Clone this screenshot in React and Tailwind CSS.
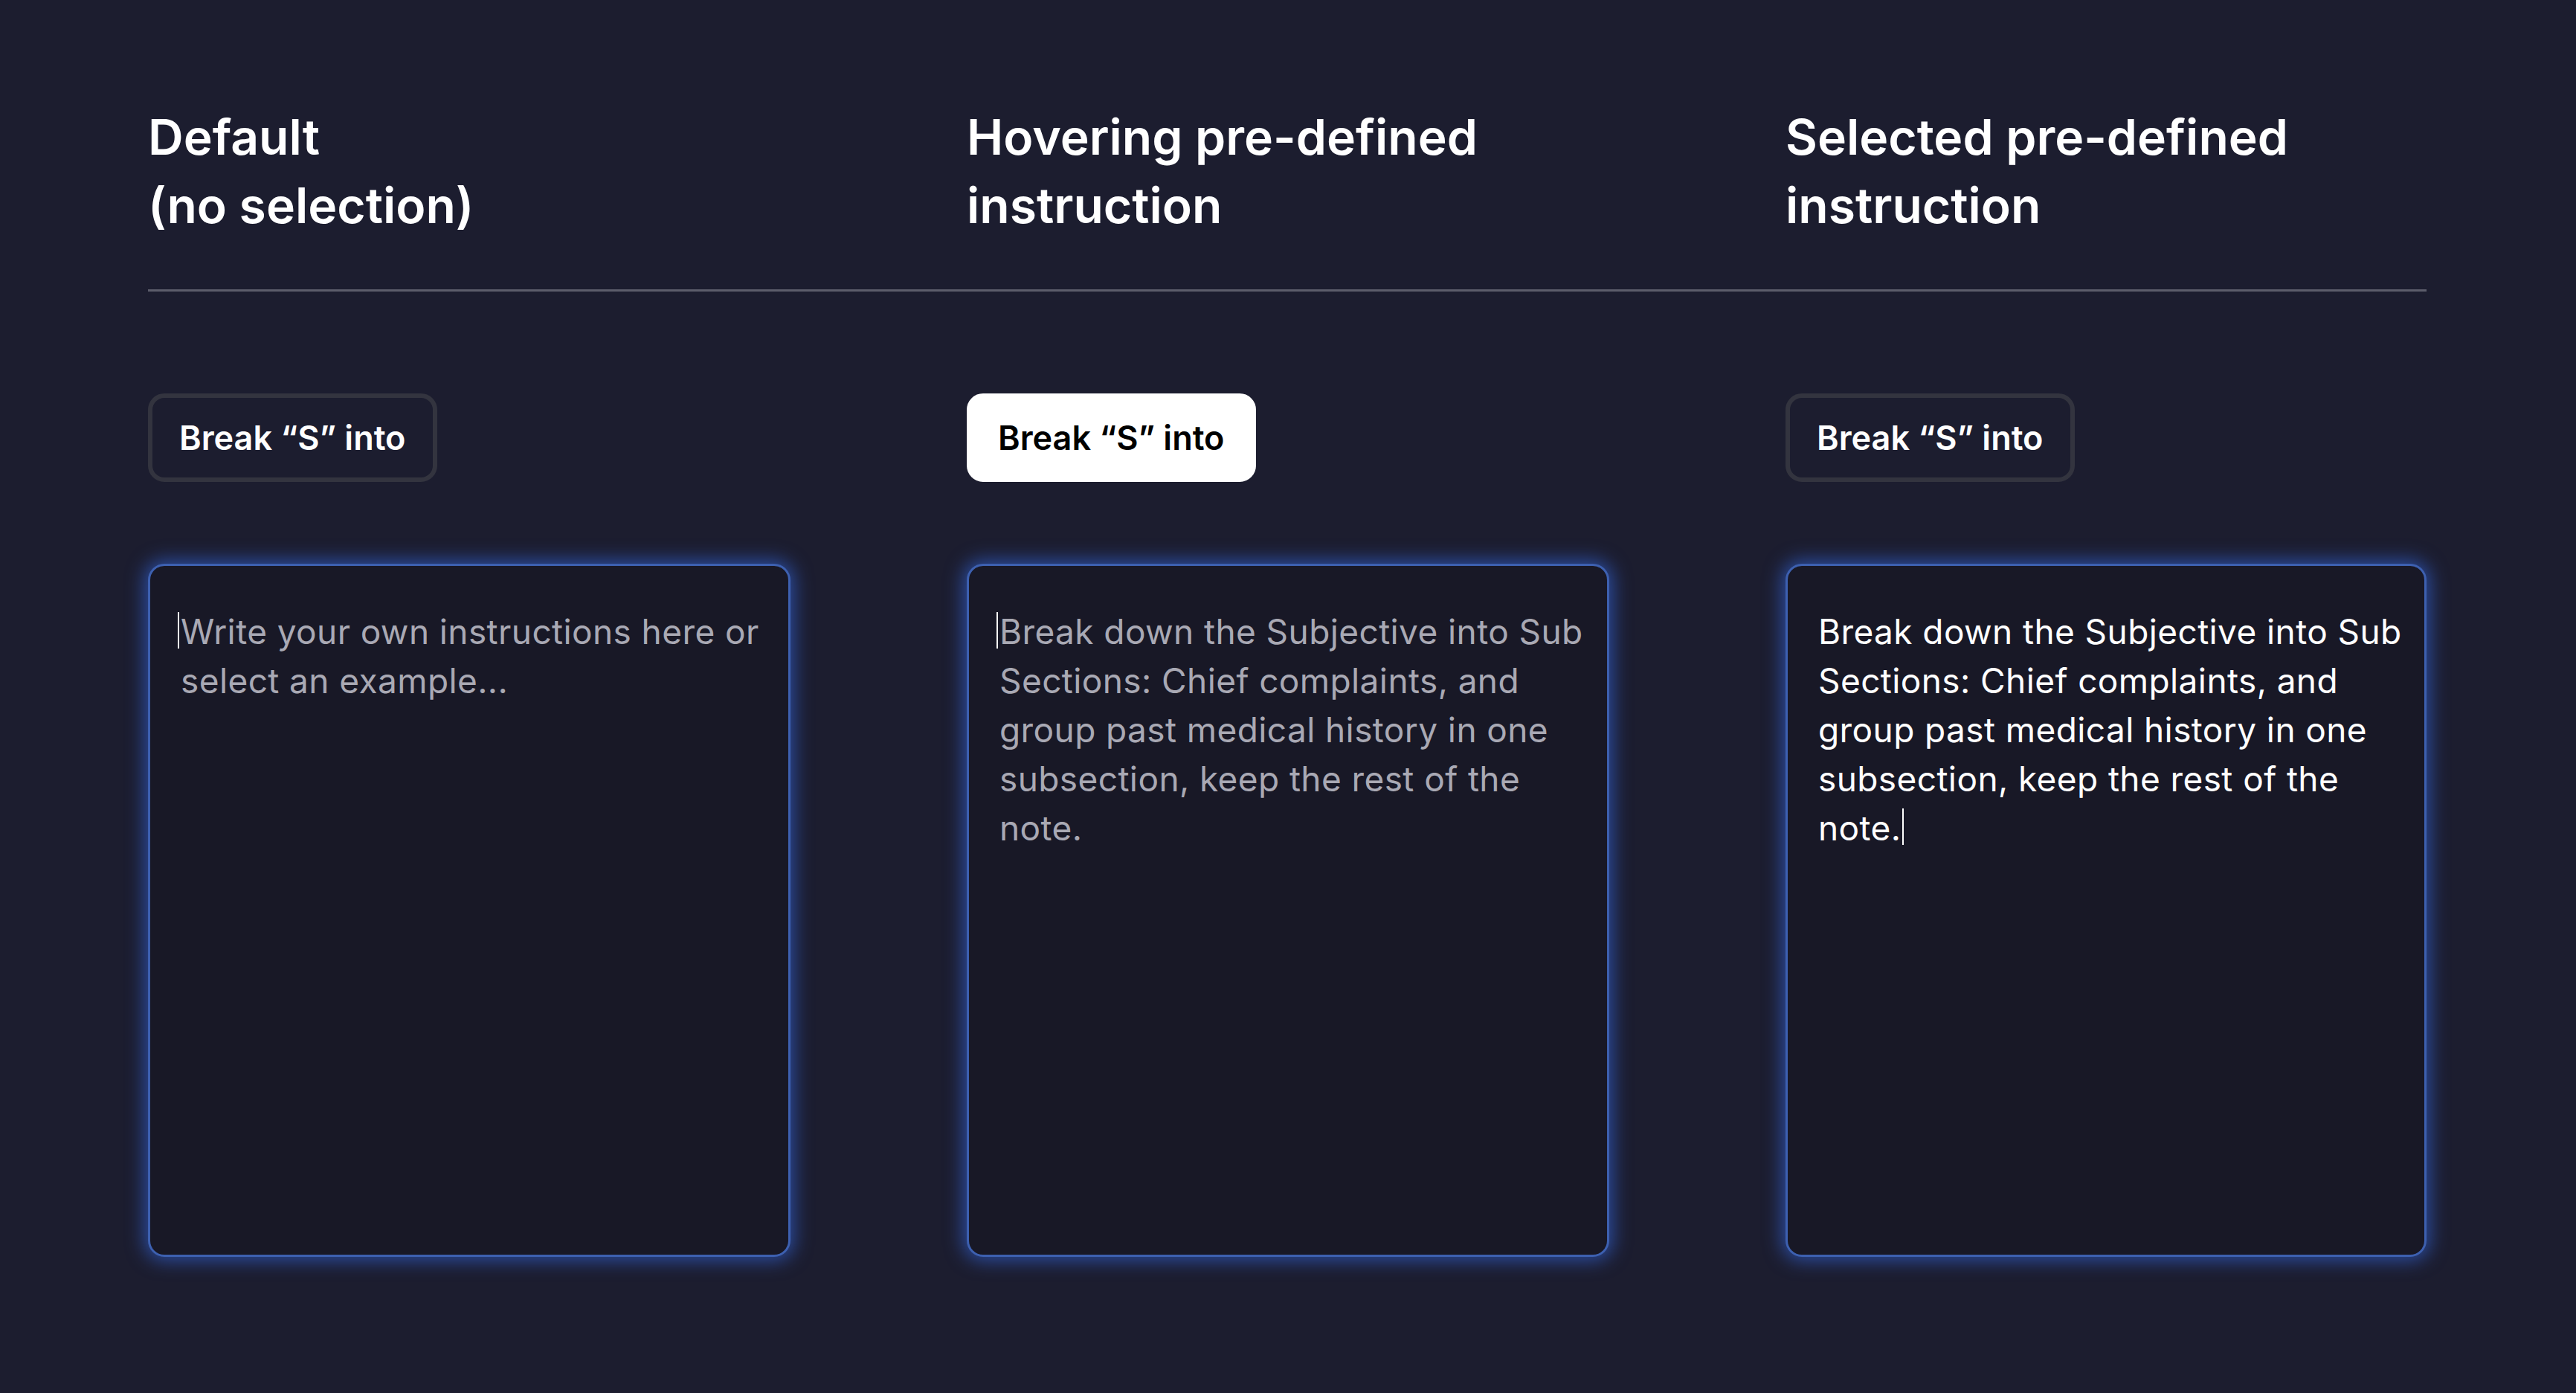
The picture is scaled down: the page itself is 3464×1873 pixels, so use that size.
const columns = [
  {
    title: ['Default', '(no selection)'],
    chip: 'default',
    text: 'Write your own instructions here or select an example...',
    textState: 'placeholder',
  },
  {
    title: ['Hovering pre-defined', 'instruction'],
    chip: 'hover',
    text: 'Break down the Subjective into Sub Sections: Chief complaints, and group past medical history in one subsection, keep the rest of the note.',
    textState: 'placeholder',
  },
  {
    title: ['Selected pre-defined', 'instruction'],
    chip: 'default',
    text: 'Break down the Subjective into Sub Sections: Chief complaints, and group past medical history in one subsection, keep the rest of the note.',
    textState: 'filled',
  },
];

function Caret({ className = '' }) {
  return <span className={`inline-block h-[49px] w-[2px] bg-white align-[-6px] ${className}`} />;
}

function Chip({ variant }) {
  const base =
    'inline-flex h-[119px] items-center rounded-[22px] border-[6px] px-[36px] text-[45px] font-semibold leading-none';
  const look =
    variant === 'hover'
      ? 'border-white bg-white text-black'
      : 'border-[#33343f] bg-transparent text-white';
  return <div className={`${base} ${look}`}>Break “S” into</div>;
}

function InstructionBox({ text, state }) {
  const filled = state === 'filled';
  return (
    <div className="h-[932px] w-full rounded-[22px] border-[3px] border-[#3d60b0] bg-[#181826] pl-[41px] pr-[26px] pt-[55px] shadow-[0_0_24px_5px_rgba(50,95,205,0.7)]">
      <p className={`text-[46px] leading-[66px] tracking-[0.4px] ${filled ? 'text-white' : 'text-[#a9a9b4]'}`}>
        {!filled && <Caret className="-ml-[4px] mr-[2px]" />}
        {text}
        {filled && <Caret className="ml-[2px]" />}
      </p>
    </div>
  );
}

export default function App() {
  return (
    <div className="min-h-screen w-full bg-[#1c1d2f] px-[199px] pt-[138px] font-['Inter','Noto_Sans',sans-serif] antialiased">
      <div className="w-[3064px]">
        <div className="grid grid-cols-[864px_864px_862px] gap-x-[237px]">
          {columns.map((col) => (
            <h2 key={col.title[0]} className="text-[66px] font-semibold leading-[92px] text-white">
              {col.title[0]}
              <br />
              {col.title[1]}
            </h2>
          ))}
        </div>

        <div className="mt-[67px] h-[3px] w-full bg-[#5c5d6b]" />

        <div className="mt-[137px] grid grid-cols-[864px_864px_862px] gap-x-[237px]">
          {columns.map((col) => (
            <div key={col.title[0]}>
              <Chip variant={col.chip} />
            </div>
          ))}
        </div>

        <div className="mt-[110px] grid grid-cols-[864px_864px_862px] gap-x-[237px]">
          {columns.map((col) => (
            <InstructionBox key={col.title[0]} text={col.text} state={col.textState} />
          ))}
        </div>
      </div>
    </div>
  );
}
